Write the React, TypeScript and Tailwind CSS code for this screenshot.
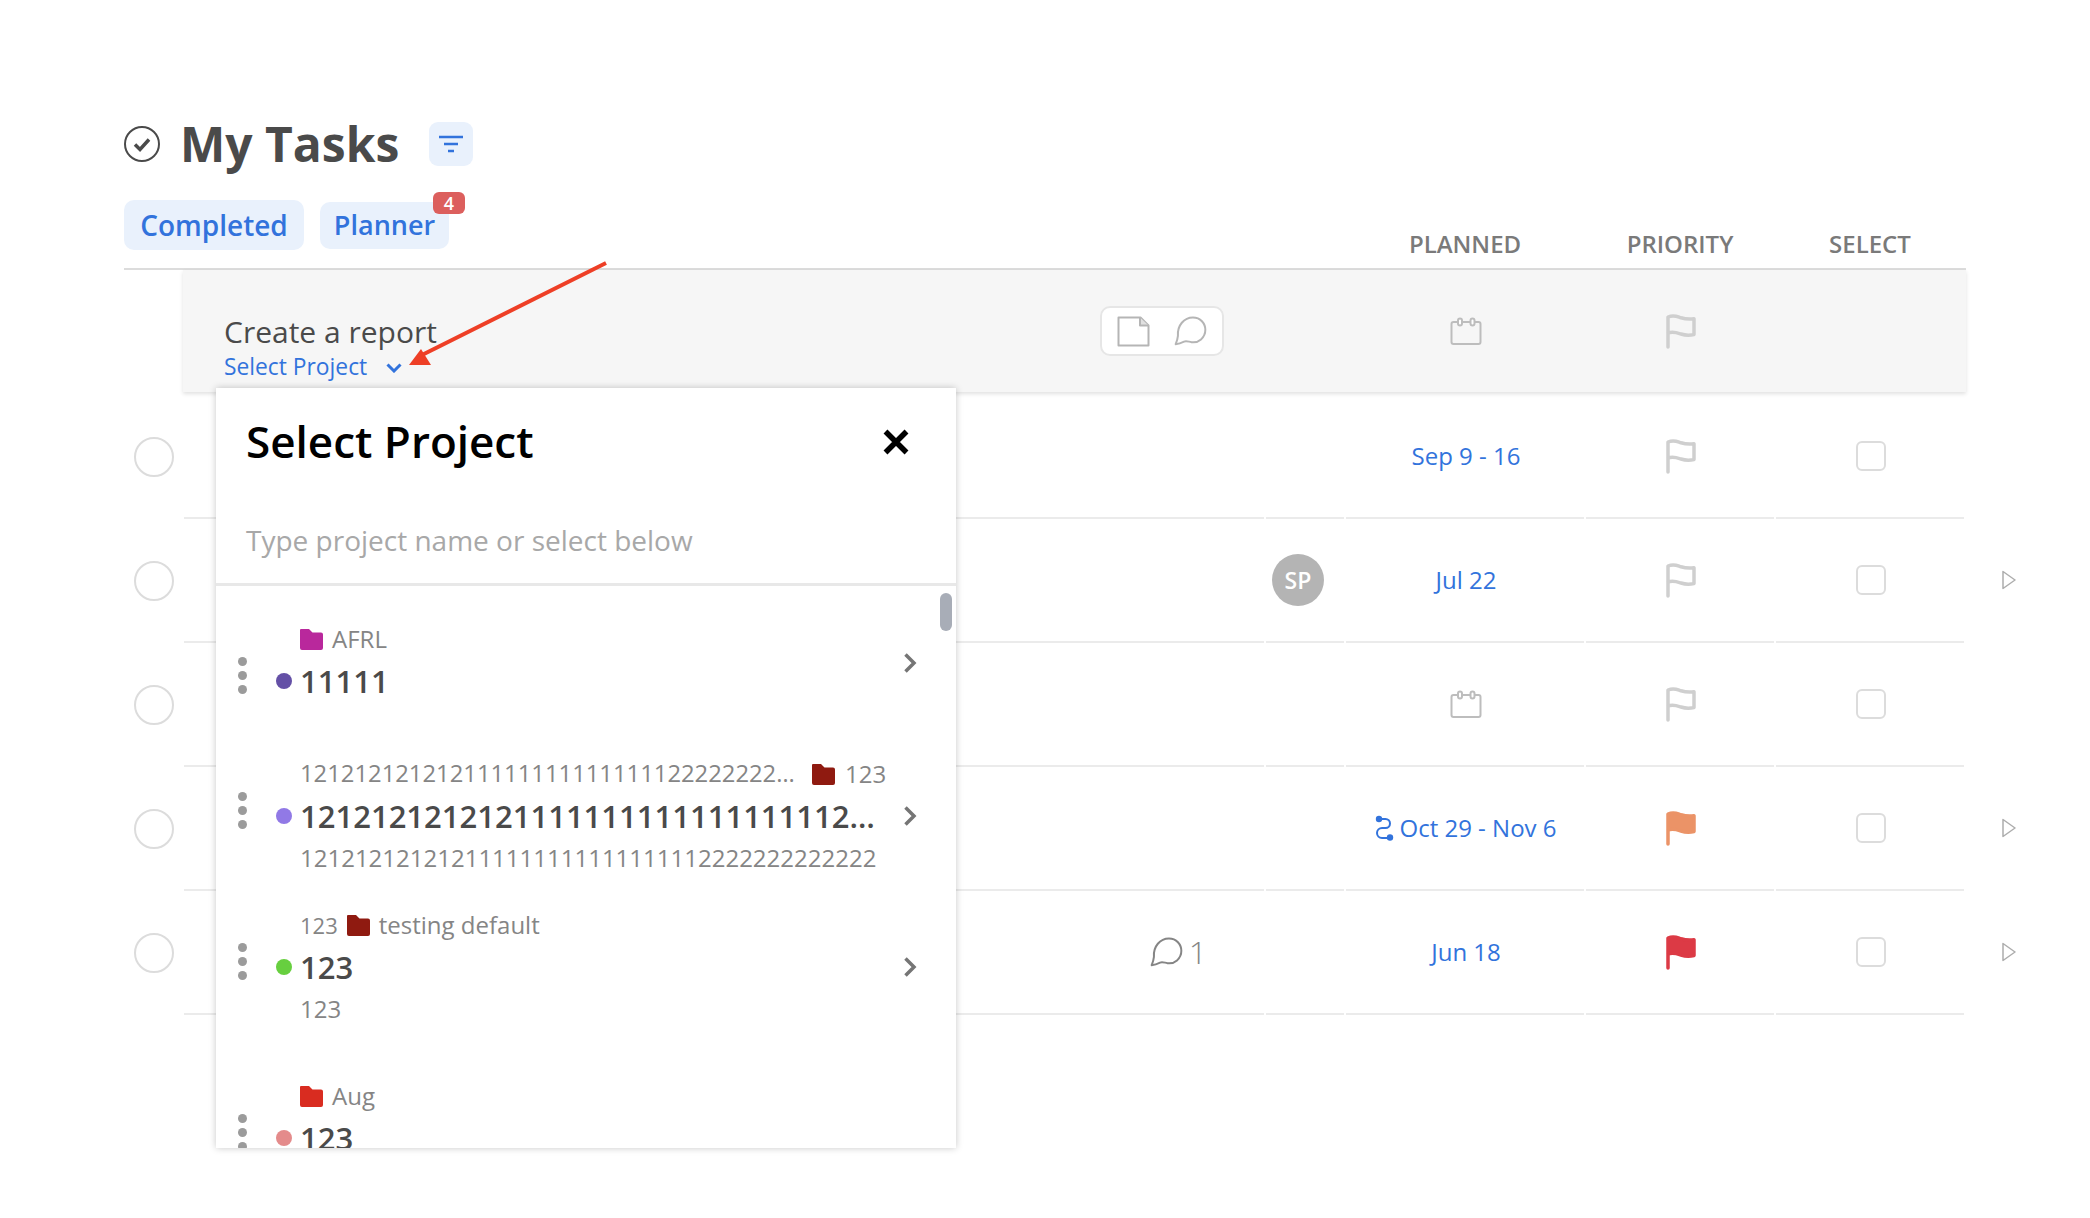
/*
 * My Tasks page with the Select Project popover open.
 */

const BLUE = "#3273dc";

function Flag({ color }: { color?: string }) {
  return (
    <svg width="30" height="35" viewBox="0 0 30 35" fill={color ?? "none"} stroke={color ?? "#cfcfcf"} strokeWidth="3.500" strokeLinejoin="round" strokeLinecap="round">
      <path d="M2 33V3c6-2.500 9-.5 13 .8 4 1.200 8 1.600 13 1v15.700c-5 1.200-9 .8-13-.5-4-1.300-8-2.800-13-1" />
    </svg>
  );
}

function CalendarIcon() {
  return (
    <svg width="32" height="28" viewBox="0 0 32 28" fill="none" stroke="#bdbdbd" strokeWidth="2">
      <rect x="1.500" y="5" width="29" height="22" rx="2" />
      <rect x="8" y="1.500" width="4" height="7" rx="2" fill="#fff" />
      <rect x="20.500" y="1.500" width="4" height="7" rx="2" fill="#fff" />
    </svg>
  );
}

function CommentIcon({ color = "#b5b5b5", size = 33 }: { color?: string; size?: number }) {
  return (
    <svg width={size} height={size * 0.9} viewBox="0 0 33 30" fill="none" stroke={color} strokeWidth="2" strokeLinejoin="round">
      <path d="M1.500 28.500c1.200-3 2-5.500 2.300-8.500C3 9.500 10 1.500 19 1.500c7.500 0 12.500 6 12.500 12.500 0 8-7 13.500-14 12.500-3-.5-5-1.800-7.500-.7-2.500 1.200-5 2.200-8.500 2.700z" />
    </svg>
  );
}

function NoteIcon() {
  return (
    <svg width="33" height="31" viewBox="0 0 33 31" fill="none" stroke="#b5b5b5" strokeWidth="2" strokeLinejoin="round">
      <path d="M1.500 1.500h22l8 8v20h-30z" />
      <path d="M23 1.500v8h8.500" fill="#e0e0e0" />
    </svg>
  );
}

function Folder({ color }: { color: string }) {
  return (
    <svg width="23" height="21" viewBox="0 0 23 21" className="shrink-0">
      <path d="M1 0h8l3.500 3.500H21a2 2 0 0 1 2 2V19a2 2 0 0 1-2 2H2a2 2 0 0 1-2-2V1a1 1 0 0 1 1-1z" fill={color} />
    </svg>
  );
}

function RepeatIcon() {
  return (
    <svg width="19" height="26" viewBox="0 0 19 26" fill="none" stroke={BLUE} strokeWidth="2">
      <path d="M4 4h6.500a4.500 4.500 0 0 1 0 9H7a5 5 0 0 0 0 10h8" />
      <circle cx="4" cy="4" r="3.200" fill={BLUE} stroke="none" />
      <circle cx="15" cy="22.500" r="3.200" fill={BLUE} stroke="none" />
    </svg>
  );
}

function RowArrow() {
  return (
    <svg width="14" height="24" viewBox="0 0 14 24" fill="none" stroke="#adadad" strokeWidth="1.500" className="-mt-[3px] ml-[36px]">
      <path d="M1 3.500v17L13 12z" strokeLinejoin="round" />
    </svg>
  );
}

function Chevron({ className }: { className?: string }) {
  return (
    <svg width="14" height="22" viewBox="0 0 14 22" fill="none" stroke="#757575" strokeWidth="3.500" className={className}>
      <path d="M2.500 2.500L11 11l-8.500 8.500" />
    </svg>
  );
}

// one table row: circle column, then main / avatar / planned / priority / select cells
function Row({
  main,
  avatar,
  planned,
  flag,
  arrow,
}: {
  main?: React.ReactNode;
  avatar?: React.ReactNode;
  planned: React.ReactNode;
  flag?: string;
  arrow?: boolean;
}) {
  const cell = "h-full flex items-center justify-center border-b-2 border-[#ebebeb]";
  return (
    <div className="flex h-[124px] items-center">
      <div className="flex w-[60px] shrink-0 justify-center">
        <div className="h-[40px] w-[40px] rounded-full border-2 border-[#dcdcdc]" />
      </div>
      <div className="flex h-full w-[1782px] gap-x-[2px]">
        <div className={`${cell} w-[1080px] !justify-end`}>{main}</div>
        <div className={`${cell} w-[78px] !justify-start pl-[6px]`}>{avatar}</div>
        <div className={`${cell} w-[238px] pl-[2px] text-[24px] text-[#3273dc]`}>{planned}</div>
        <div className={`${cell} w-[188px] pl-[2px]`}>
          <Flag color={flag} />
        </div>
        <div className={`${cell} w-[188px] pl-[2px]`}>
          <div className="h-[30px] w-[30px] rounded-[6px] border-2 border-[#dcdcdc]" />
        </div>
      </div>
      {arrow && <RowArrow />}
    </div>
  );
}

function ProjectItem({
  mt,
  meta,
  name,
  sub,
  dot,
  chevronClass,
}: {
  mt: string;
  meta: React.ReactNode;
  name: string;
  sub?: string;
  dot: string;
  chevronClass?: string;
}) {
  return (
    <div className={mt}>
      <div className="flex h-[42px] items-center pl-[84px] text-[24px] text-[#858585]">{meta}</div>
      <div className="flex h-[42px] items-center pl-[22px]">
        <div className="-mt-[12px] flex w-[9px] shrink-0 flex-col gap-[5px]">
          <span className="h-[9px] w-[9px] rounded-full bg-[#9b9b9b]" />
          <span className="h-[9px] w-[9px] rounded-full bg-[#9b9b9b]" />
          <span className="h-[9px] w-[9px] rounded-full bg-[#9b9b9b]" />
        </div>
        <span className={`ml-[29px] h-[16px] w-[16px] shrink-0 rounded-full ${dot}`} />
        <span className="ml-[8px] w-[578px] truncate text-[31px] font-semibold text-[#4a4a4a]">{name}</span>
        <Chevron className={`ml-[25px] shrink-0 ${chevronClass ?? ""}`} />
      </div>
      {sub && <div className="flex h-[42px] items-center pl-[84px] text-[24px] text-[#858585]">{sub}</div>}
    </div>
  );
}

function SelectProjectPopover() {
  return (
    <div className="absolute left-[216px] top-[388px] flex h-[760px] w-[740px] flex-col bg-white shadow-[0_0_7px_rgba(0,0,0,0.22)]">
      <div className="border-b-[3px] border-[#e8e8e8] px-[30px] pb-[23px] pt-[25px]">
        <div className="flex h-[56px] items-center justify-between">
          <span className="text-[44px] font-semibold text-black">Select Project</span>
          <svg width="26" height="26" viewBox="0 0 26 26" stroke="#000" strokeWidth="5.500" className="mr-[17px] mt-[2px]">
            <path d="M2.500 2.500l21 21M23.500 2.500l-21 21" />
          </svg>
        </div>
        <div className="mt-[51px] h-[40px] text-[28px] leading-[40px] text-[#a8a8a8]">Type project name or select below</div>
      </div>
      <div className="relative flex-1 overflow-hidden">
        <div className="absolute right-[4px] top-[7px] h-[38px] w-[12px] rounded-full bg-[#a8adb7]" />
        <ProjectItem
          mt="mt-[32px]"
          dot="bg-[#6450a6]"
          name="11111"
          chevronClass="-mt-[36px]"
          meta={
            <div className="flex items-center gap-[9px]">
              <Folder color="#b9289c" />
              <span>AFRL</span>
            </div>
          }
        />
        <ProjectItem
          mt="mt-[51px]"
          dot="bg-[#9179e6]"
          name="1212121212121111111111111111112222222222"
          sub="121212121212111111111111111112222222222222"
          meta={
            <div className="flex items-center">
              <span className="w-[497px] truncate text-[23.800px]">121212121212111111111111111222222222222222222</span>
              <span className="ml-[15px]">
                <Folder color="#8f1a10" />
              </span>
              <span className="ml-[10px]">123</span>
            </div>
          }
        />
        <ProjectItem
          mt="mt-[25px]"
          dot="bg-[#67cf3f]"
          name="123"
          sub="123"
          meta={
            <div className="flex items-center">
              <span className="text-[22px]">123</span>
              <span className="ml-[9px]">
                <Folder color="#8f1a10" />
              </span>
              <span className="ml-[9px]">testing default</span>
            </div>
          }
        />
        <ProjectItem
          mt="mt-[45px]"
          dot="bg-[#e48b8b]"
          name="123"
          chevronClass="invisible"
          meta={
            <div className="flex items-center gap-[9px]">
              <Folder color="#d92c20" />
              <span>Aug</span>
            </div>
          }
        />
      </div>
    </div>
  );
}

export default function App() {
  return (
    <div className="relative h-[1218px] w-[2090px] overflow-hidden bg-white pl-[124px] pt-[122px] font-['Open_Sans',sans-serif] text-[#4a4a4a]">
      {/* Title */}
      <div className="flex h-[44px] items-center">
        <svg width="36" height="36" viewBox="0 0 36 36" fill="none" stroke="#4a4a4a">
          <circle cx="18" cy="18" r="17" strokeWidth="2" />
          <path d="M11 18.500l5 5 9-10" strokeWidth="3.500" />
        </svg>
        <h1 className="ml-[20px] text-[48px] font-bold leading-none">My Tasks</h1>
        <div className="ml-[30px] flex h-[44px] w-[44px] items-center justify-center rounded-[9px] bg-[#e9f1fc]">
          <svg width="24" height="18" viewBox="0 0 24 18" stroke="#3273dc" strokeWidth="2.500">
            <path d="M0 2h24M5 9h14M9 16h6" />
          </svg>
        </div>
      </div>

      {/* Tabs and column labels */}
      <div className="flex h-[104px] w-[1842px] items-start border-b-2 border-[#dcdcdc] pt-[34px]">
        <div className="flex w-[1222px] items-start gap-[16px]">
          <div className="flex h-[50px] w-[180px] items-center justify-center rounded-[10px] bg-[#e9f1fc] text-[28px] font-semibold text-[#3273dc]">
            Completed
          </div>
          <div className="relative mt-[2px] flex h-[47px] w-[129px] items-center justify-center rounded-[10px] bg-[#e9f1fc] text-[27px] font-semibold text-[#3273dc]">
            Planner
            <span className="absolute -top-[10px] left-[113px] flex h-[22px] w-[32px] items-center justify-center rounded-[6px] bg-[#dc5f5d] text-[18px] font-semibold text-white">
              4
            </span>
          </div>
        </div>
        <div className="mt-[28px] flex text-[24px] font-semibold leading-[32px] text-[#7a7a7a]">
          <span className="w-[238px] text-center">PLANNED</span>
          <span className="ml-[2px] w-[188px] text-center">PRIORITY</span>
          <span className="ml-[2px] w-[188px] text-center">SELECT</span>
        </div>
      </div>

      {/* Task being created */}
      <div className="mb-[3px] ml-[59px] flex h-[122px] w-[1783px] gap-x-[2px] bg-[#f6f6f6] shadow-[0_2px_4px_rgba(0,0,0,0.12)]">
        <div className="flex w-[1081px] items-center justify-between pl-[41px] pr-[40px]">
          <div className="pt-[30px]">
            <div className="text-[30px] leading-[41px] text-[#4a4a4a]">Create a report</div>
            <div className="flex items-center text-[22.800px] font-medium leading-[30px] text-[#3273dc]">
              Select Project
              <svg width="16" height="10" viewBox="0 0 16 10" fill="none" stroke="#3273dc" strokeWidth="3" className="ml-[19px] mt-[3px]">
                <path d="M1.500 1.500L8 8l6.500-6.500" />
              </svg>
            </div>
          </div>
          <div className="flex h-[50px] w-[124px] items-center justify-center gap-[24px] rounded-[10px] border-2 border-[#e6e6e6] bg-white">
            <NoteIcon />
            <CommentIcon />
          </div>
        </div>
        <div className="w-[78px]" />
        <div className="flex w-[238px] items-center justify-center pl-[2px]">
          <CalendarIcon />
        </div>
        <div className="flex w-[188px] items-center justify-center pl-[2px]">
          <Flag />
        </div>
      </div>

      {/* Tasks */}
      <Row planned="Sep 9 - 16" />
      <Row
        arrow
        avatar={
          <div className="flex h-[52px] w-[52px] items-center justify-center rounded-full bg-[#b4b4b4] text-[23px] font-semibold text-white">
            SP
          </div>
        }
        planned="Jul 22"
      />
      <Row planned={<CalendarIcon />} />
      <Row
        arrow
        flag="#eb9367"
        planned={
          <div className="flex items-center gap-[5px]">
            <RepeatIcon />
            Oct 29 - Nov 6
          </div>
        }
      />
      <Row
        arrow
        flag="#dc3a45"
        planned="Jun 18"
        main={
          <div className="mr-[57px] flex items-center gap-[6px] text-[32px] font-light leading-none text-[#858585]">
            <CommentIcon color="#858585" size={33} />1
          </div>
        }
      />

      <SelectProjectPopover />

      {/* Annotation arrow */}
      <svg width="2090" height="1218" viewBox="0 0 2090 1218" className="pointer-events-none absolute left-0 top-0">
        <path d="M606 263L420 356" stroke="#ee3f26" strokeWidth="4" fill="none" />
        <path d="M409 365L421 349L431 365z" fill="#ee3f26" />
      </svg>
    </div>
  );
}
